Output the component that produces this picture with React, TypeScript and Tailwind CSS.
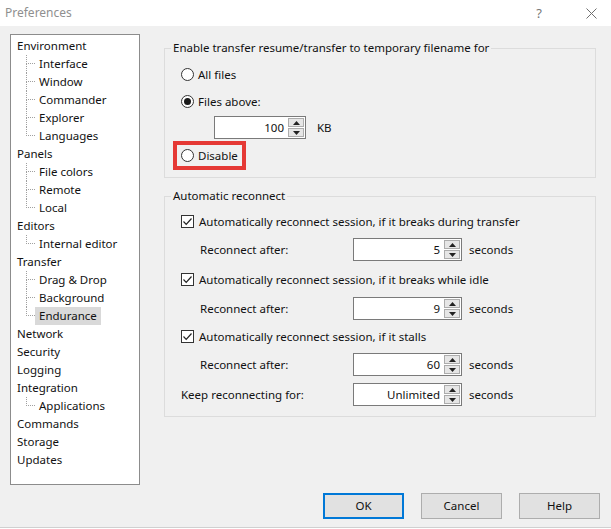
import React from 'react';

type TreeNode = { label: string; children?: string[] };

const tree: TreeNode[] = [
  { label: 'Environment', children: ['Interface', 'Window', 'Commander', 'Explorer', 'Languages'] },
  { label: 'Panels', children: ['File colors', 'Remote', 'Local'] },
  { label: 'Editors', children: ['Internal editor'] },
  { label: 'Transfer', children: ['Drag & Drop', 'Background', 'Endurance'] },
  { label: 'Network' },
  { label: 'Security' },
  { label: 'Logging' },
  { label: 'Integration', children: ['Applications'] },
  { label: 'Commands' },
  { label: 'Storage' },
  { label: 'Updates' },
];

const Radio: React.FC<{ checked?: boolean; label: string }> = ({ checked, label }) => (
  <div className="flex h-[17px] items-center">
    <span className="flex h-[13px] w-[13px] items-center justify-center rounded-full border border-[#333333] bg-white">
      {checked && <span className="h-[7px] w-[7px] rounded-full bg-[#1a1a1a]" />}
    </span>
    <span className="ml-[4px]">{label}</span>
  </div>
);

const Check: React.FC<{ label: string }> = ({ label }) => (
  <div className="flex h-[17px] items-center">
    <span className="flex h-[13px] w-[13px] items-center justify-center border border-[#333333] bg-white">
      <svg width="11" height="11" viewBox="0 0 11 11">
        <path d="M1.5 5.5 L4.2 8.3 L9.5 2.5" fill="none" stroke="#222" strokeWidth="1.2" />
      </svg>
    </span>
    <span className="ml-[5px]">{label}</span>
  </div>
);

const Spin: React.FC<{ value: string; width: string }> = ({ value, width }) => (
  <div className={`flex h-[23px] border border-[#7a7a7a] bg-white ${width}`}>
    <div className="flex flex-1 items-center justify-end pr-[4px]">{value}</div>
    <div className="flex w-[17px] flex-col gap-[1px] py-[1px] pr-[1px]">
      <div className="flex flex-1 items-center justify-center border border-[#acacac] bg-[#e6e6e6]">
        <svg width="7" height="4" viewBox="0 0 7 4">
          <path d="M0 4 L3.5 0 L7 4 Z" fill="#222" />
        </svg>
      </div>
      <div className="flex flex-1 items-center justify-center border border-[#acacac] bg-[#e6e6e6]">
        <svg width="7" height="4" viewBox="0 0 7 4">
          <path d="M0 0 L3.5 4 L7 0 Z" fill="#222" />
        </svg>
      </div>
    </div>
  </div>
);

const SpinRow: React.FC<{ label: string; value: string; indent?: boolean; className?: string }> = ({
  label,
  value,
  indent,
  className,
}) => (
  <div className={`flex h-[23px] items-center ${className ?? ''}`}>
    <span className={indent ? 'w-[172px] pl-[19px]' : 'w-[172px]'}>{label}</span>
    <Spin value={value} width="w-[109px]" />
    <span className="ml-[7px]">seconds</span>
  </div>
);

const TreeChild: React.FC<{ label: string; last: boolean; selected: boolean }> = ({ label, last, selected }) => (
  <div className="flex h-[18px] items-stretch pl-[15px]">
    <span className="flex w-[9px] flex-col">
      <span className="h-[9px] border-b border-l border-dotted border-[#a0a0a0]" />
      <span className={last ? 'flex-1' : 'flex-1 border-l border-dotted border-[#a0a0a0]'} />
    </span>
    <span className={selected ? 'flex items-center bg-[#d9d9d9] px-[4px]' : 'flex items-center px-[4px]'}>{label}</span>
  </div>
);

const Button: React.FC<{ label: string; primary?: boolean }> = ({ label, primary }) => (
  <div
    className={
      primary
        ? 'flex h-[26px] w-[81px] items-center justify-center border-2 border-[#0078d7] bg-[#e1e1e1]'
        : 'flex h-[26px] w-[81px] items-center justify-center border border-[#adadad] bg-[#e1e1e1]'
    }
  >
    {label}
  </div>
);

export default function App() {
  return (
    <div className="flex h-[528px] w-[611px] flex-col border-b border-[#d0d0d0] bg-[#f0f0f0] font-['Noto_Sans',sans-serif] text-[11.5px] leading-[16px] text-[#111]">
      {/* title bar */}
      <div className="flex h-[26px] items-center bg-white pl-[5px] pr-[14px] text-[12px] text-[#8f8f8f]">
        <span>Preferences</span>
        <span className="ml-auto text-[13px] text-[#777]">?</span>
        <svg className="ml-[44px]" width="11" height="11" viewBox="0 0 11 11">
          <path d="M0.5 0.5 L10.5 10.5 M10.5 0.5 L0.5 10.5" stroke="#6f6f6f" strokeWidth="1" />
        </svg>
      </div>

      <div className="flex flex-1 pl-[10px] pt-[8px]">
        {/* category tree */}
        <div className="h-[451px] w-[130px] border border-[#8c8c8c] bg-white pt-[2px]">
          {tree.map((node) => (
            <React.Fragment key={node.label}>
              <div className="flex h-[18px] items-center pl-[6px]">{node.label}</div>
              {node.children?.map((c, i) => (
                <TreeChild
                  key={c}
                  label={c}
                  last={i === node.children!.length - 1}
                  selected={c === 'Endurance'}
                />
              ))}
            </React.Fragment>
          ))}
        </div>

        {/* endurance page */}
        <div className="ml-[24px] mt-[6px] w-[432px]">
          <fieldset className="border border-[#dcdcdc] pb-[7px]">
            <legend className="ml-[6px] px-[2px] leading-[16px]">
              Enable transfer resume/transfer to temporary filename for
            </legend>
            <div className="pl-[16px]">
              <div className="mt-[10px]">
                <Radio label="All files" />
              </div>
              <div className="mt-[10px]">
                <Radio checked label="Files above:" />
              </div>
              <div className="mt-[6px] flex items-center pl-[33px]">
                <Spin value="100" width="w-[92px]" />
                <span className="ml-[11px]">KB</span>
              </div>
              <div className="-ml-[8px] mt-[2px] flex w-[73px] border-4 border-[#e53935] pl-[4px] pt-[2px] pb-[2px]">
                <Radio label="Disable" />
              </div>
            </div>
          </fieldset>

          <fieldset className="mt-[10px] border border-[#dcdcdc] pb-[10px]">
            <legend className="ml-[6px] px-[2px] leading-[16px]">Automatic reconnect</legend>
            <div className="pl-[16px]">
              <div className="mt-[9px]">
                <Check label="Automatically reconnect session, if it breaks during transfer" />
              </div>
              <SpinRow className="mt-[8px]" indent label="Reconnect after:" value="5" />
              <div className="mt-[10px]">
                <Check label="Automatically reconnect session, if it breaks while idle" />
              </div>
              <SpinRow className="mt-[9px]" indent label="Reconnect after:" value="9" />
              <div className="mt-[8px]">
                <Check label="Automatically reconnect session, if it stalls" />
              </div>
              <SpinRow className="mt-[8px]" indent label="Reconnect after:" value="60" />
              <SpinRow className="mt-[7px]" label="Keep reconnecting for:" value="Unlimited" />
            </div>
          </fieldset>
        </div>
      </div>

      {/* dialog buttons */}
      <div className="flex justify-end gap-[17px] pb-[8px] pr-[11px]">
        <Button primary label="OK" />
        <Button label="Cancel" />
        <Button label="Help" />
      </div>
    </div>
  );
}
